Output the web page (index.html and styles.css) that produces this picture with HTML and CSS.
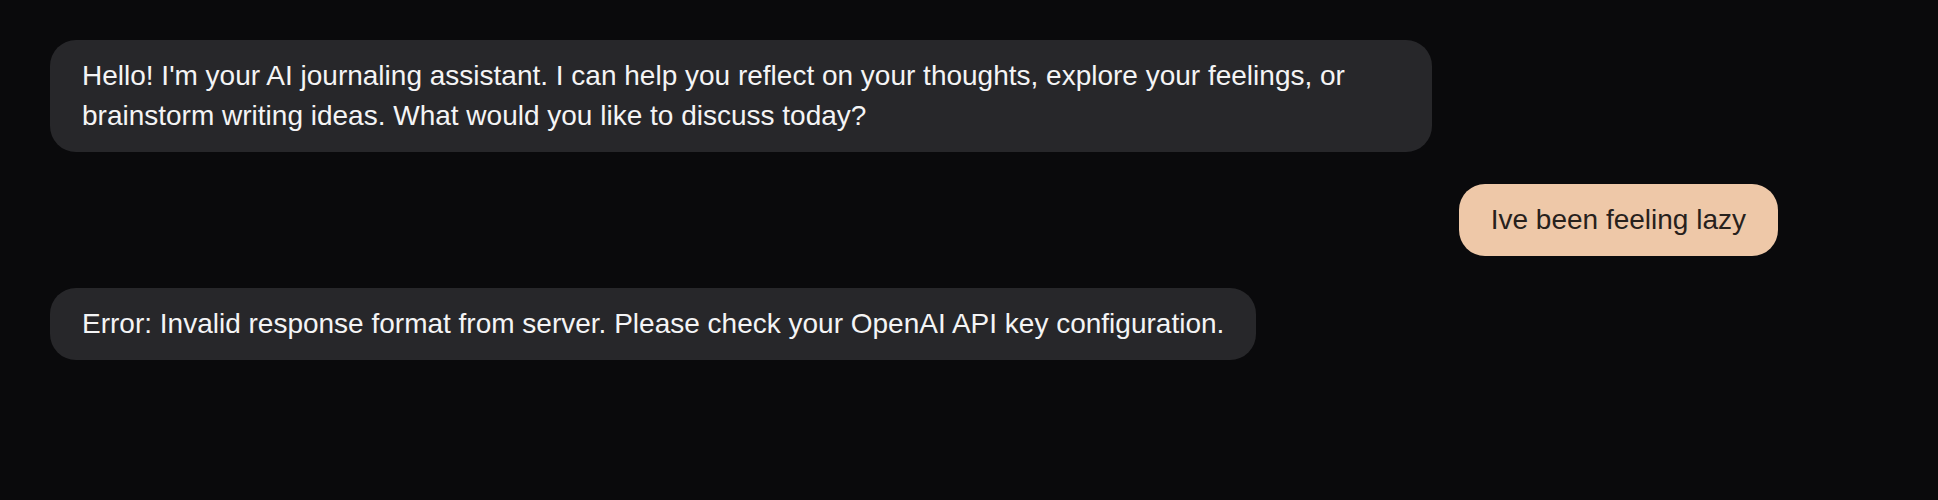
FILE: index.html
```html
<!DOCTYPE html>
<html lang="en">
<head>
<meta charset="utf-8">
<title>Journal Chat</title>
<link rel="stylesheet" href="styles.css">
</head>
<body>
<main class="chat">
  <div class="row row-ai">
    <div class="bubble bubble-ai">Hello! I'm your AI journaling assistant. I can help you reflect on your thoughts, explore your feelings, or brainstorm writing ideas. What would you like to discuss today?</div>
  </div>
  <div class="row row-user">
    <div class="bubble bubble-user">Ive been feeling lazy</div>
  </div>
  <div class="row row-ai">
    <div class="bubble bubble-ai">Error: Invalid response format from server. Please check your OpenAI API key configuration.</div>
  </div>
</main>
</body>
</html>
```
FILE: styles.css
```css
html, body {
  margin: 0;
  padding: 0;
  background: #0a0a0c;
  height: 100%;
}
body {
  font-family: "Liberation Sans", Arial, Helvetica, sans-serif;
}
.chat {
  display: flex;
  flex-direction: column;
  gap: 32px;
  padding: 40px 160px 0 50px;
}
.row {
  display: flex;
}
.row-ai {
  justify-content: flex-start;
}
.row-user {
  justify-content: flex-end;
}
.bubble {
  max-width: 80%;
  box-sizing: border-box;
  padding: 16px 32px;
  border-radius: 26px;
  font-size: 28px;
  line-height: 40px;
}
.bubble-ai {
  background: #27272a;
  color: #f4f4f5;
}
.bubble-user {
  background: #eec8a8;
  color: #27211c;
}
```
